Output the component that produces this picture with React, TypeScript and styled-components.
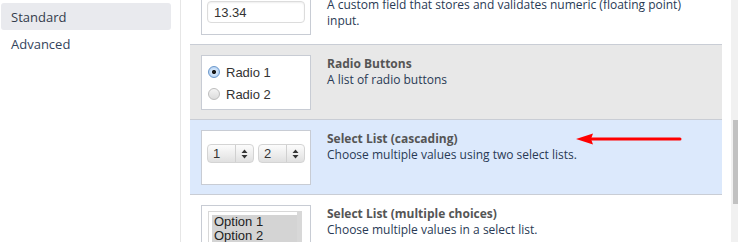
import React from "react";
import styled, { createGlobalStyle } from "styled-components";

const GlobalStyle = createGlobalStyle`
  html, body {
    margin: 0;
    padding: 0;
    background: #fff;
  }
  body {
    width: 738px;
    height: 242px;
    overflow: hidden;
    font-family: "Open Sans", "Liberation Sans", sans-serif;
  }
`;

const Page = styled.div`
  display: flex;
  height: 242px;
  overflow: hidden;
`;

const Sidebar = styled.nav`
  width: 181px;
  flex-shrink: 0;
  border-right: 1px solid #e6e6e6;
  padding: 3px 9px 0 1px;
  box-sizing: border-box;
`;

const NavItem = styled.div<{ $active?: boolean }>`
  height: 27px;
  display: flex;
  align-items: center;
  padding-left: 10px;
  border-radius: 3px;
  font-size: 13px;
  color: ${(p) => (p.$active ? "#343c4c" : "#34445c")};
  background: ${(p) => (p.$active ? "#e9eaee" : "transparent")};
`;

const Main = styled.main`
  flex: 1;
  padding: 0 9px;
  overflow: hidden;
`;

const List = styled.div`
  margin-top: -30px;
`;

const Row = styled.div<{ $tone?: "plain" | "muted" | "active" }>`
  position: relative;
  display: flex;
  align-items: flex-start;
  gap: 16px;
  padding: 10px 10px 9px 11px;
  border-bottom: 1px solid #c9cdd5;
  background: ${(p) =>
    p.$tone === "muted" ? "#e8e8e8" : p.$tone === "active" ? "#dce9fc" : "#fff"};
`;

const Preview = styled.div`
  width: 110px;
  height: 55px;
  flex-shrink: 0;
  box-sizing: border-box;
  background: #fff;
  border: 1px solid #c8ccd4;
  font-family: "Liberation Sans", Arial, sans-serif;
  font-size: 13px;
  color: #333;
  overflow: hidden;
`;

const Info = styled.div`
  padding-top: 1px;
  font-size: 12px;
  line-height: 16px;
`;

const Title = styled.div`
  font-weight: 700;
  color: #555;
`;

const Desc = styled.div`
  color: #293a55;
  max-width: 380px;
`;

const NumberInput = styled.div`
  margin: 20px 0 0 5px;
  width: 98px;
  height: 22px;
  box-sizing: border-box;
  border: 1px solid #dcdcdc;
  border-radius: 4px;
  box-shadow: inset 0 1px 2px rgba(0, 0, 0, 0.07);
  padding-left: 6px;
  display: flex;
  align-items: center;
`;

const RadioList = styled.div`
  padding: 5px 0 0 6px;
`;

const RadioLine = styled.div`
  display: flex;
  align-items: center;
  height: 22px;
  gap: 6px;
`;

const RadioDot = styled.span<{ $checked?: boolean }>`
  width: 12px;
  height: 12px;
  border-radius: 50%;
  box-sizing: border-box;
  border: 1px solid ${(p) => (p.$checked ? "#6b98cc" : "#bdbdbd")};
  background: ${(p) =>
    p.$checked
      ? "radial-gradient(circle, #1a1a1a 0 1.7px, #d6e8fb 2.4px, #9fc2ec 100%)"
      : "linear-gradient(#f4f4f4, #dcdcdc)"};
`;

const SelectPair = styled.div`
  display: flex;
  gap: 4px;
  padding: 13px 0 0 5px;
`;

const SelectBox = styled.div`
  width: 47px;
  height: 19px;
  box-sizing: border-box;
  border: 1px solid #d4d4d4;
  border-radius: 4px;
  background: linear-gradient(#fcfcfc, #e0e0e0);
  display: flex;
  align-items: center;
`;

const SelectValue = styled.span`
  flex: 1;
  padding-left: 5px;
  font-size: 13px;
  border-right: 1px solid #d0d0d0;
  height: 17px;
  line-height: 17px;
`;

const SelectArrows = styled.span`
  width: 17px;
  display: flex;
  justify-content: center;
`;

const MultiSelect = styled.div`
  margin: 5px 0 0 6px;
  width: 94px;
  border: 1px solid #d8d8d8;
  border-right-width: 5px;
  padding: 3px 0 0 3px;
  box-sizing: border-box;
`;

const Option = styled.div`
  background: #d4d4d4;
  padding-left: 2px;
  font-size: 13px;
  line-height: 14px;
  color: #222;
`;

const Arrow = styled.svg`
  position: absolute;
  left: 386px;
  top: 13px;
`;

const ScrollTrack = styled.div`
  width: 7px;
  flex-shrink: 0;
  background: #f1f1f1;
  padding-top: 120px;
  box-sizing: border-box;
  display: flex;
  justify-content: flex-end;
`;

const ScrollThumb = styled.div`
  width: 5px;
  height: 84px;
  background: #c1c1c1;
`;

const UpDown = () => (
  <svg width="7" height="10" viewBox="0 0 7 10">
    <path d="M3.5 0.5 L6.5 4 L0.5 4 Z M3.5 9.5 L6.5 6 L0.5 6 Z" fill="#333" />
  </svg>
);

export default function App() {
  return (
    <>
      <GlobalStyle />
      <Page>
        <Sidebar>
          <NavItem $active>Standard</NavItem>
          <NavItem>Advanced</NavItem>
        </Sidebar>
        <Main>
          <List>
            <Row>
              <Preview>
                <NumberInput>13.34</NumberInput>
              </Preview>
              <Info>
                <Title>Number Field</Title>
                <Desc>
                  A custom field that stores and validates numeric (floating point) input.
                </Desc>
              </Info>
            </Row>
            <Row $tone="muted">
              <Preview>
                <RadioList>
                  <RadioLine>
                    <RadioDot $checked />
                    Radio 1
                  </RadioLine>
                  <RadioLine>
                    <RadioDot />
                    Radio 2
                  </RadioLine>
                </RadioList>
              </Preview>
              <Info>
                <Title>Radio Buttons</Title>
                <Desc>A list of radio buttons</Desc>
              </Info>
            </Row>
            <Row $tone="active">
              <Preview>
                <SelectPair>
                  <SelectBox>
                    <SelectValue>1</SelectValue>
                    <SelectArrows>
                      <UpDown />
                    </SelectArrows>
                  </SelectBox>
                  <SelectBox>
                    <SelectValue>2</SelectValue>
                    <SelectArrows>
                      <UpDown />
                    </SelectArrows>
                  </SelectBox>
                </SelectPair>
              </Preview>
              <Info>
                <Title>Select List (cascading)</Title>
                <Desc>Choose multiple values using two select lists.</Desc>
              </Info>
              <Arrow width="106" height="12" viewBox="0 0 106 12">
                <path d="M0 6 L17 0.5 L15 6 L17 11.5 Z" fill="#f00" />
                <line x1="14" y1="6" x2="104" y2="6" stroke="#f00" strokeWidth="3" strokeLinecap="round" />
              </Arrow>
            </Row>
            <Row>
              <Preview>
                <MultiSelect>
                  <Option>Option 1</Option>
                  <Option>Option 2</Option>
                  <Option>Option 3</Option>
                </MultiSelect>
              </Preview>
              <Info>
                <Title>Select List (multiple choices)</Title>
                <Desc>Choose multiple values in a select list.</Desc>
              </Info>
            </Row>
          </List>
        </Main>
        <ScrollTrack>
          <ScrollThumb />
        </ScrollTrack>
      </Page>
    </>
  );
}
